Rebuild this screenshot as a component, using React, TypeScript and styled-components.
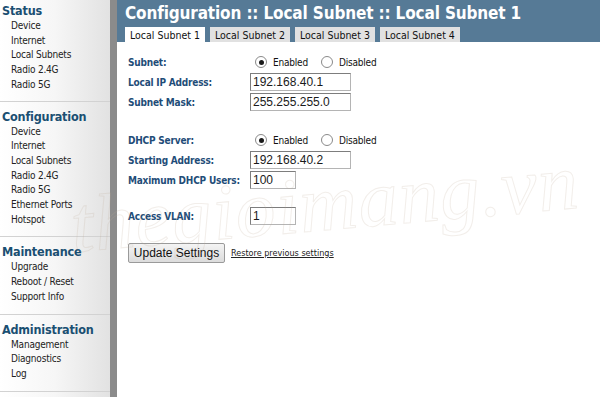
import React from "react";
import styled, { createGlobalStyle } from "styled-components";

const GlobalStyle = createGlobalStyle`
  html, body {
    margin: 0;
    padding: 0;
    background: #ffffff;
  }
  body {
    font-family: "DejaVu Sans Condensed", "DejaVu Sans", sans-serif;
    font-stretch: condensed;
  }
`;

const Page = styled.div`
  position: relative;
  display: flex;
  width: 600px;
  height: 397px;
  overflow: hidden;
`;

const Sidebar = styled.nav`
  width: 110px;
  flex-shrink: 0;
  background: linear-gradient(to right, #ffffff 0%, #f6f6f6 50%, #e2e2e2 100%);
`;

const Splitter = styled.div`
  width: 7px;
  flex-shrink: 0;
  background: #8b8b8b;
`;

const Section = styled.div`
  padding: 7px 0 9px;
  border-bottom: 1px solid #d2d2d2;

  &:first-child {
    padding: 3px 0 8px;
  }
`;

const SectionTitle = styled.div`
  padding-left: 2px;
  font-size: 12.5px;
  line-height: 16px;
  letter-spacing: -0.2px;
  font-weight: bold;
  color: #1a4f72;
`;

const NavItem = styled.div`
  padding-left: 11px;
  font-size: 10px;
  line-height: 14.7px;
  letter-spacing: -0.2px;
  color: #222222;
`;

const Main = styled.main`
  flex: 1;
  display: flex;
  flex-direction: column;
`;

const Header = styled.header`
  background: #567a96;
  padding: 2px 0 0 8px;
`;

const Title = styled.h1`
  margin: 0;
  font-size: 17px;
  line-height: 23px;
  letter-spacing: -0.15px;
  font-weight: bold;
  color: #ffffff;
  white-space: nowrap;
`;

const Tabs = styled.div`
  display: flex;
  gap: 5px;
  margin-top: 2px;
`;

const Tab = styled.div<{ $active?: boolean }>`
  height: 15px;
  padding: 0 5px;
  font-size: 10.5px;
  line-height: 16px;
  color: #111111;
  background: ${(p) => (p.$active ? "#ffffff" : "#e1e1e1")};
`;

const Content = styled.div`
  padding: 10px 0 0 11px;
`;

const Row = styled.div<{ $gap?: number }>`
  display: flex;
  align-items: center;
  height: 20px;
  margin-top: ${(p) => p.$gap || 0}px;
`;

const Label = styled.div`
  width: 122px;
  font-size: 10px;
  letter-spacing: -0.2px;
  font-weight: bold;
  color: #1f4d78;
  white-space: nowrap;
`;

const RadioGroup = styled.div`
  display: flex;
  align-items: center;
  font-size: 10px;
  letter-spacing: -0.2px;
  color: #111111;
`;

const RadioOption = styled.span`
  display: flex;
  align-items: center;
  margin-left: 5px;
  margin-right: 8px;
`;

const RadioDot = styled.span<{ $checked?: boolean }>`
  position: relative;
  width: 10px;
  height: 10px;
  margin-right: 6px;
  border: 1px solid #8a8a8a;
  border-radius: 50%;
  background: #ffffff;

  &::after {
    content: "";
    position: absolute;
    left: 2.5px;
    top: 2.5px;
    width: 5px;
    height: 5px;
    border-radius: 50%;
    background: ${(p) => (p.$checked ? "#1a1a1a" : "transparent")};
  }
`;

const TextBox = styled.div<{ $width: number }>`
  box-sizing: border-box;
  width: ${(p) => p.$width}px;
  height: 18px;
  padding-left: 2px;
  border: 1px solid #7d7d7d;
  border-right-color: #b4b4b4;
  border-bottom-color: #b4b4b4;
  font-family: "Liberation Sans", Arial, sans-serif;
  font-size: 12px;
  line-height: 16px;
  color: #1a1a1a;
  background: #ffffff;
`;

const Actions = styled.div`
  display: flex;
  align-items: center;
  margin-top: 17px;
`;

const Button = styled.button`
  width: 97px;
  height: 20px;
  padding: 0;
  font-family: "Liberation Sans", Arial, sans-serif;
  font-size: 12px;
  color: #111111;
  background: linear-gradient(#f4f4f4, #dcdcdc);
  border: 1px solid #9a9a9a;
  border-radius: 2px;
`;

const RestoreLink = styled.a`
  margin-left: 6px;
  font-size: 9px;
  color: #222222;
  text-decoration: underline;
`;

const Watermark = styled.div`
  position: absolute;
  left: 70px;
  top: 158px;
  font-family: "Liberation Serif", serif;
  font-style: italic;
  font-size: 80px;
  letter-spacing: 1px;
  color: transparent;
  -webkit-text-stroke: 1px rgba(190, 170, 150, 0.2);
  transform: rotate(-5deg);
  pointer-events: none;
  white-space: nowrap;
`;

const nav = [
  { title: "Status", items: ["Device", "Internet", "Local Subnets", "Radio 2.4G", "Radio 5G"] },
  {
    title: "Configuration",
    items: ["Device", "Internet", "Local Subnets", "Radio 2.4G", "Radio 5G", "Ethernet Ports", "Hotspot"],
  },
  { title: "Maintenance", items: ["Upgrade", "Reboot / Reset", "Support Info"] },
  { title: "Administration", items: ["Management", "Diagnostics", "Log"] },
];

const tabs = ["Local Subnet 1", "Local Subnet 2", "Local Subnet 3", "Local Subnet 4"];

const Radios: React.FC = () => (
  <RadioGroup>
    <RadioOption>
      <RadioDot $checked />
      Enabled
    </RadioOption>
    <RadioOption>
      <RadioDot />
      Disabled
    </RadioOption>
  </RadioGroup>
);

export default function App() {
  return (
    <Page>
      <GlobalStyle />
      <Sidebar>
        {nav.map((s) => (
          <Section key={s.title}>
            <SectionTitle>{s.title}</SectionTitle>
            {s.items.map((i) => (
              <NavItem key={i}>{i}</NavItem>
            ))}
          </Section>
        ))}
      </Sidebar>
      <Splitter />
      <Main>
        <Header>
          <Title>Configuration :: Local Subnet :: Local Subnet 1</Title>
          <Tabs>
            {tabs.map((t, i) => (
              <Tab key={t} $active={i === 0}>
                {t}
              </Tab>
            ))}
          </Tabs>
        </Header>
        <Content>
          <Row>
            <Label>Subnet:</Label>
            <Radios />
          </Row>
          <Row>
            <Label>Local IP Address:</Label>
            <TextBox $width={101}>192.168.40.1</TextBox>
          </Row>
          <Row>
            <Label>Subnet Mask:</Label>
            <TextBox $width={101}>255.255.255.0</TextBox>
          </Row>

          <Row $gap={18}>
            <Label>DHCP Server:</Label>
            <Radios />
          </Row>
          <Row>
            <Label>Starting Address:</Label>
            <TextBox $width={101}>192.168.40.2</TextBox>
          </Row>
          <Row>
            <Label>Maximum DHCP Users:</Label>
            <TextBox $width={46}>100</TextBox>
          </Row>

          <Row $gap={16}>
            <Label>Access VLAN:</Label>
            <TextBox $width={46}>1</TextBox>
          </Row>

          <Actions>
            <Button>Update Settings</Button>
            <RestoreLink href="#">Restore previous settings</RestoreLink>
          </Actions>
        </Content>
      </Main>
      <Watermark>thegioimang.vn</Watermark>
    </Page>
  );
}
